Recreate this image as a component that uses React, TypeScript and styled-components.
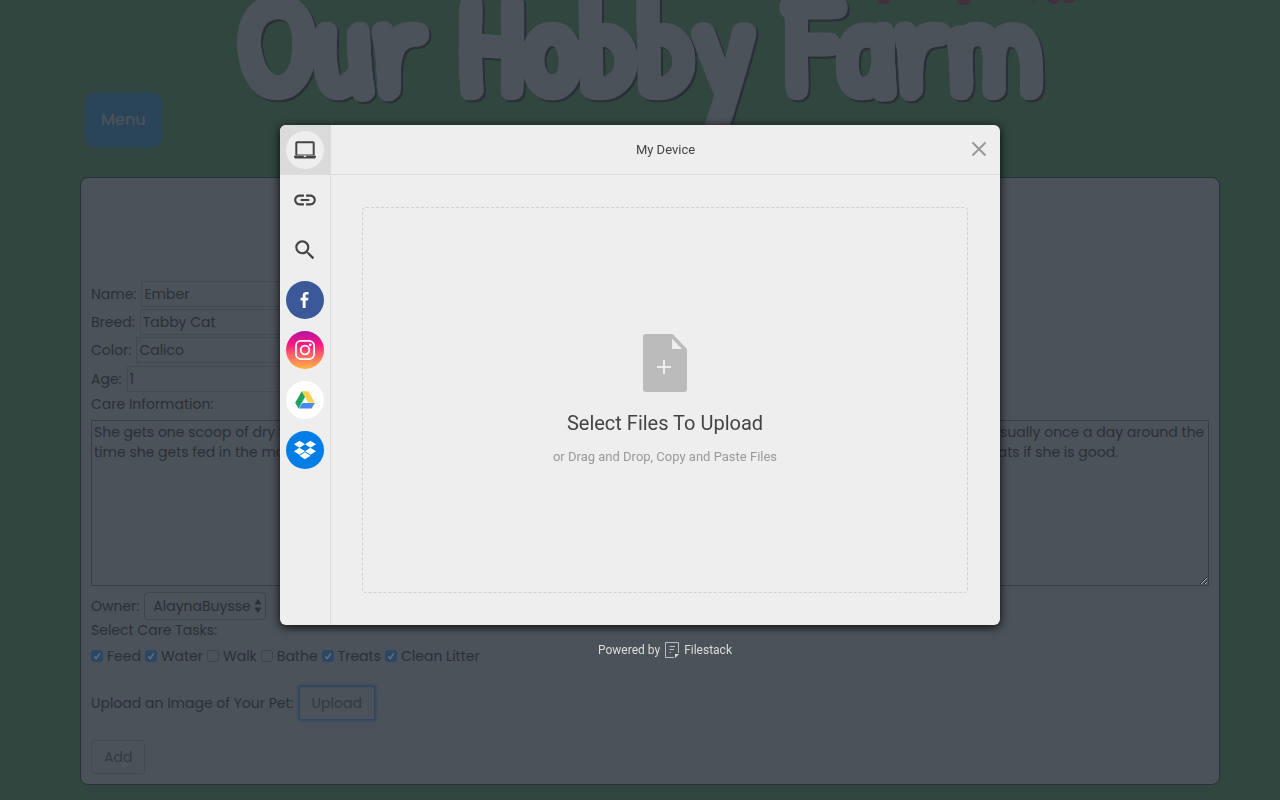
import React from "react";
import styled, { createGlobalStyle, css } from "styled-components";
import { MdLink, MdSearch } from "react-icons/md";
import { FaDropbox } from "react-icons/fa";

const GlobalStyle = createGlobalStyle`
  *, *::before, *::after { box-sizing: border-box; }
  body {
    margin: 0;
    background: #31463f;
    color: #2a3037;
    font-family: Poppins, Lato, "Open Sans", sans-serif;
    font-size: 14px;
    line-height: 20px;
  }
  button, input, select, textarea { font: inherit; color: inherit; }
`;

const Page = styled.div`
  min-height: 100vh;
  overflow: hidden;
`;

const Header = styled.header`
  position: relative;
  height: 93px;
`;

const Flourish = styled.svg`
  position: absolute;
  top: 0;
  left: 50%;
  margin-left: 225px;
  fill: #42303d;
`;

const Title = styled.h1`
  margin: 0;
  text-align: center;
  white-space: nowrap;
  font-family: "Patrick Hand", "Liberation Sans Narrow", "Roboto Condensed", Lato, sans-serif;
  font-weight: 700;
  font-size: 140px;
  line-height: 86px;
  color: #4c525a;
  text-shadow: 4px 0 #4c525a, -4px 0 #4c525a, 0 4px #4c525a, 0 -4px #4c525a,
    3px 3px #4c525a, -3px 3px #4c525a, 3px -3px #4c525a, -3px -3px #4c525a,
    4px 2px #4c525a, -4px 2px #4c525a, 4px -2px #4c525a, -4px -2px #4c525a,
    2px 4px #4c525a, -2px 4px #4c525a, 2px -4px #4c525a, -2px -4px #4c525a;
  filter: drop-shadow(2px 2px 0 #2b2f38);
`;

const Content = styled.main`
  padding: 0 60px 15px 80px;
`;

const MenuButton = styled.button`
  position: relative;
  display: block;
  height: 54px;
  margin: 0 0 30px 5px;
  padding: 0 16px;
  border: 0;
  border-radius: 8px;
  background: #2a4559;
  color: #4c525a;
  font-size: 16px;
  font-weight: 500;
`;

const PetForm = styled.form`
  padding: 102px 10px 10px;
  border: 1px solid #2b3038;
  border-radius: 8px;
  background: #4c525a;
`;

const Row = styled.div<{ $tall?: boolean }>`
  display: flex;
  align-items: center;
  gap: 5px;
  min-height: ${(p) => (p.$tall ? "30px" : "28px")};
`;

const Label = styled.label`
  white-space: nowrap;
`;

const TextInput = styled.input`
  width: 240px;
  height: 26px;
  padding: 0 2px;
  border: 1px solid #434950;
  background: transparent;
`;

const LabelLine = styled.div`
  height: 26px;
`;

const Notes = styled.textarea`
  display: block;
  width: 100%;
  height: 166px;
  margin-bottom: 6px;
  padding: 1px 2px;
  border: 1px solid #383e45;
  background: transparent;
  resize: vertical;
`;

const SelectWrap = styled.span`
  position: relative;
  display: inline-flex;
`;

const Select = styled.select`
  appearance: none;
  height: 28px;
  padding: 0 14px 0 8px;
  border: 1px solid #3e444b;
  border-radius: 4px;
  background: transparent;
`;

const Arrows = styled.svg`
  position: absolute;
  right: 4px;
  top: 7px;
  pointer-events: none;
`;

const Tasks = styled.div`
  display: flex;
  align-items: center;
  gap: 4px;
  height: 20px;
  margin-bottom: 20px;
`;

const Task = styled.label`
  display: flex;
  align-items: center;
  gap: 4px;
`;

const Check = styled.input`
  appearance: none;
  width: 12px;
  height: 12px;
  margin: 0;
  border: 1px solid #3e444b;
  border-radius: 3px;
  &:checked {
    border-color: #2b4766;
    background: #2b4766 url("data:image/svg+xml,%3Csvg xmlns='http://www.w3.org/2000/svg' viewBox='0 0 10 10'%3E%3Cpath d='M2.2 5.4l2 2.2L7.8 2.2' fill='none' stroke='%23686f78' stroke-width='1.5'/%3E%3C/svg%3E") center / 10px 10px;
  }
`;

const FormButton = styled.button<{ $focused?: boolean }>`
  height: 34px;
  padding: 0 12px;
  border: 1px solid #434950;
  border-radius: 4px;
  background: transparent;
  color: #33393f;
  ${(p) =>
    p.$focused &&
    css`
      border-color: #2f4560;
      border-radius: 2px;
      box-shadow: 0 0 0 1px #364a63, 0 0 3px 1px #2f4560;
    `}
`;

const UploadRow = styled(Row)`
  min-height: 34px;
  margin-bottom: 20px;
`;

const Overlay = styled.div`
  position: fixed;
  inset: 0;
  display: flex;
  flex-direction: column;
  align-items: center;
  justify-content: center;
  font-family: Roboto, sans-serif;
`;

const Dialog = styled.section`
  display: flex;
  width: 720px;
  max-width: 100%;
  height: 500px;
  overflow: hidden;
  border-radius: 6px;
  background: #eee;
  color: #444;
  box-shadow: 0 2px 10px rgba(0, 0, 0, 0.9);
`;

const Sidebar = styled.nav`
  width: 51px;
  flex: none;
  border-right: 1px solid #dbdbdb;
`;

const Source = styled.button<{ $active?: boolean }>`
  display: flex;
  align-items: center;
  justify-content: center;
  width: 50px;
  height: 50px;
  padding: 0;
  border: 0;
  background: ${(p) => (p.$active ? "#dbdbdb" : "transparent")};
`;

const Disc = styled.span<{ $fill?: string }>`
  display: flex;
  align-items: center;
  justify-content: center;
  width: 38px;
  height: 38px;
  border-radius: 50%;
  background: ${(p) => p.$fill ?? "#eee"};
  color: ${(p) => (p.$fill ? "#fff" : "#444")};
`;

const Main = styled.div`
  display: flex;
  flex: 1;
  flex-direction: column;
`;

const DialogHeader = styled.header`
  position: relative;
  display: flex;
  align-items: center;
  justify-content: center;
  height: 50px;
  border-bottom: 1px solid #dbdbdb;
`;

const DialogTitle = styled.h2`
  margin: 0;
  font-size: 13px;
  font-weight: 400;
`;

const Close = styled.button`
  position: absolute;
  right: 13px;
  top: 16px;
  display: flex;
  padding: 0;
  border: 0;
  background: none;
`;

const DropZone = styled.button`
  display: flex;
  flex: 1;
  flex-direction: column;
  align-items: center;
  justify-content: center;
  margin: 32px 32px 32px 31px;
  padding: 0 0 1px;
  border: 1px dashed #d0d0d0;
  border-radius: 4px;
  background: transparent;
`;

const DropTitle = styled.span`
  margin: 19px 0 14px;
  font-size: 20px;
  line-height: 24px;
  color: #444;
`;

const DropHint = styled.span`
  font-size: 13px;
  line-height: 16px;
  color: #999;
`;

const Footer = styled.footer`
  display: flex;
  align-items: center;
  gap: 5px;
  height: 50px;
  padding-left: 50px;
  font-size: 12px;
  color: #dcdcdc;
`;

const LaptopIcon = () => (
  <svg width="22" height="18" viewBox="0 0 22 18">
    <path d="M3 .3h16a1.700 1.700 0 0 1 1.700 1.700v12.600H1.300V2A1.700 1.700 0 0 1 3 .3zM3.300 2.200v11.200h15.400V2.200z" fill="#444" fillRule="evenodd" />
    <path d="M0 14.800h9.800v1.200h2.400v-1.200H22c0 2-.8 2.800-2.200 2.800H2.200C.8 17.600 0 16.800 0 14.800z" fill="#444" />
  </svg>
);

const FacebookIcon = () => (
  <svg width="10" height="18" viewBox="0 0 10 18" fill="#fff">
    <path d="M2.700 17V9.600H.6V6.700h2.100V4.500C2.700 2 4.200.9 6.400.9c1 0 1.900.1 2.100.1v2.600H7c-1.100 0-1.400.6-1.400 1.400v1.700h2.800L8 9.600H5.600V17z" />
  </svg>
);

const InstagramIcon = () => (
  <svg width="20" height="20" viewBox="0 0 20 20" fill="none" stroke="#fff" strokeWidth="1.800">
    <rect x=".9" y=".9" width="18.2" height="18.200" rx="5" />
    <circle cx="10" cy="10" r="4.300" />
    <circle cx="15.200" cy="4.800" r="1.400" fill="#fff" stroke="none" />
  </svg>
);

const DriveIcon = () => (
  <svg width="20" height="18" viewBox="0 0 20 18">
    <path d="M6.700 .3h6.600l6.500 11.400h-6.600z" fill="#ffd04b" />
    <path d="M6.700 .3L.2 11.700l3.300 5.900 6.500-11.500z" fill="#1da462" />
    <path d="M7.200 11.900h12.600l-3.300 5.700H3.900z" fill="#4688f4" />
  </svg>
);

const FileIcon = () => (
  <svg width="44" height="58" viewBox="0 0 44 58">
    <path d="M3 0h26.500L44 15v40a3 3 0 0 1-3 3H3a3 3 0 0 1-3-3V3a3 3 0 0 1 3-3z" fill="#bbb" />
    <path d="M29 4.500V15h10z" fill="#eee" />
    <path d="M21 26v14M14 33h14" stroke="#eee" strokeWidth="2" />
  </svg>
);

const FilestackIcon = () => (
  <svg width="14" height="16" viewBox="0 0 14 16" fill="none" stroke="#b9bcc1">
    <path d="M9 15.500H.5V.5h13V11" />
    <path d="M10 12h4l-4 4z" fill="#dcdcdc" stroke="none" />
    <path d="M4.500 4.500H10M4.500 7.500H9M4.500 10.500H6" />
  </svg>
);

const fields = [
  { id: "name", label: "Name:", value: "Ember" },
  { id: "breed", label: "Breed:", value: "Tabby Cat" },
  { id: "color", label: "Color:", value: "Calico" },
  { id: "age", label: "Age:", value: "1", tall: true },
];

const tasks = [
  { name: "Feed", done: true },
  { name: "Water", done: true },
  { name: "Walk", done: false },
  { name: "Bathe", done: false },
  { name: "Treats", done: true },
  { name: "Clean Litter", done: true },
];

const careNotes =
  "She gets one scoop of dry food every morning and around half a can of wet food at night. Her litter box needs to be cleaned out, usually once a day around the\n" +
  "time she gets fed in the morning. Please make sure that her water bowl is always full and fresh. She can also have two or more treats if she is good.";

const sources = [
  { name: "My Device", icon: <LaptopIcon />, active: true },
  { name: "Link", icon: <MdLink size={26} /> },
  { name: "Web Search", icon: <MdSearch size={26} /> },
  { name: "Facebook", icon: <FacebookIcon />, fill: "#3b5998" },
  { name: "Instagram", icon: <InstagramIcon />, fill: "linear-gradient(#b014a5, #fb1780 35%, #fd5b68 60%, #ffb540)" },
  { name: "Google Drive", icon: <DriveIcon />, fill: "#fff" },
  { name: "Dropbox", icon: <FaDropbox size={22} />, fill: "#007ee5" },
];

export default function App() {
  return (
    <>
      <GlobalStyle />
      <Page>
        <Header>
          <Flourish width="220" height="8" viewBox="865 0 220 8" aria-hidden="true">
            <path d="M878 0h12v3q-6 2-12 0zM958 0h12v4q-6 2-12 0zM1032 1l4-1-2 2zM1048 0h12q-1 4-6 4t-6-4zM1062 0h13q-2 3-7 3t-6-3z" />
          </Flourish>
          <Title>Our Hobby Farm</Title>
        </Header>
        <Content>
          <MenuButton type="button">Menu</MenuButton>
          <PetForm onSubmit={(e) => e.preventDefault()}>
            {fields.map((f) => (
              <Row key={f.id} $tall={f.tall}>
                <Label htmlFor={f.id}>{f.label}</Label>
                <TextInput id={f.id} defaultValue={f.value} />
              </Row>
            ))}
            <LabelLine>
              <Label htmlFor="care">Care Information:</Label>
            </LabelLine>
            <Notes id="care" defaultValue={careNotes} />
            <Row>
              <Label htmlFor="owner">Owner:</Label>
              <SelectWrap>
                <Select id="owner" defaultValue="AlaynaBuysse">
                  <option>AlaynaBuysse</option>
                </Select>
                <Arrows width="8" height="14" viewBox="0 0 8 14" fill="#2a3037">
                  <path d="M4 0l3.500 5.500h-7zM4 14L.5 8.500h7z" />
                </Arrows>
              </SelectWrap>
            </Row>
            <LabelLine>Select Care Tasks:</LabelLine>
            <Tasks>
              {tasks.map((t) => (
                <Task key={t.name}>
                  <Check type="checkbox" defaultChecked={t.done} />
                  {t.name}
                </Task>
              ))}
            </Tasks>
            <UploadRow>
              <Label htmlFor="upload">Upload an Image of Your Pet:</Label>
              <FormButton id="upload" type="button" $focused>
                Upload
              </FormButton>
            </UploadRow>
            <FormButton type="submit">Add</FormButton>
          </PetForm>
        </Content>
      </Page>
      <Overlay>
        <Dialog role="dialog" aria-label="My Device">
          <Sidebar>
            {sources.map((s) => (
              <Source key={s.name} type="button" aria-label={s.name} $active={s.active}>
                <Disc $fill={s.fill}>{s.icon}</Disc>
              </Source>
            ))}
          </Sidebar>
          <Main>
            <DialogHeader>
              <DialogTitle>My Device</DialogTitle>
              <Close type="button" aria-label="Close">
                <svg width="16" height="16" viewBox="0 0 16 16" stroke="#999" strokeWidth="2">
                  <path d="M1.500 1.500l13 13M14.500 1.500l-13 13" />
                </svg>
              </Close>
            </DialogHeader>
            <DropZone type="button">
              <FileIcon />
              <DropTitle>Select Files To Upload</DropTitle>
              <DropHint>or Drag and Drop, Copy and Paste Files</DropHint>
            </DropZone>
          </Main>
        </Dialog>
        <Footer>
          Powered by
          <FilestackIcon />
          Filestack
        </Footer>
      </Overlay>
    </>
  );
}
